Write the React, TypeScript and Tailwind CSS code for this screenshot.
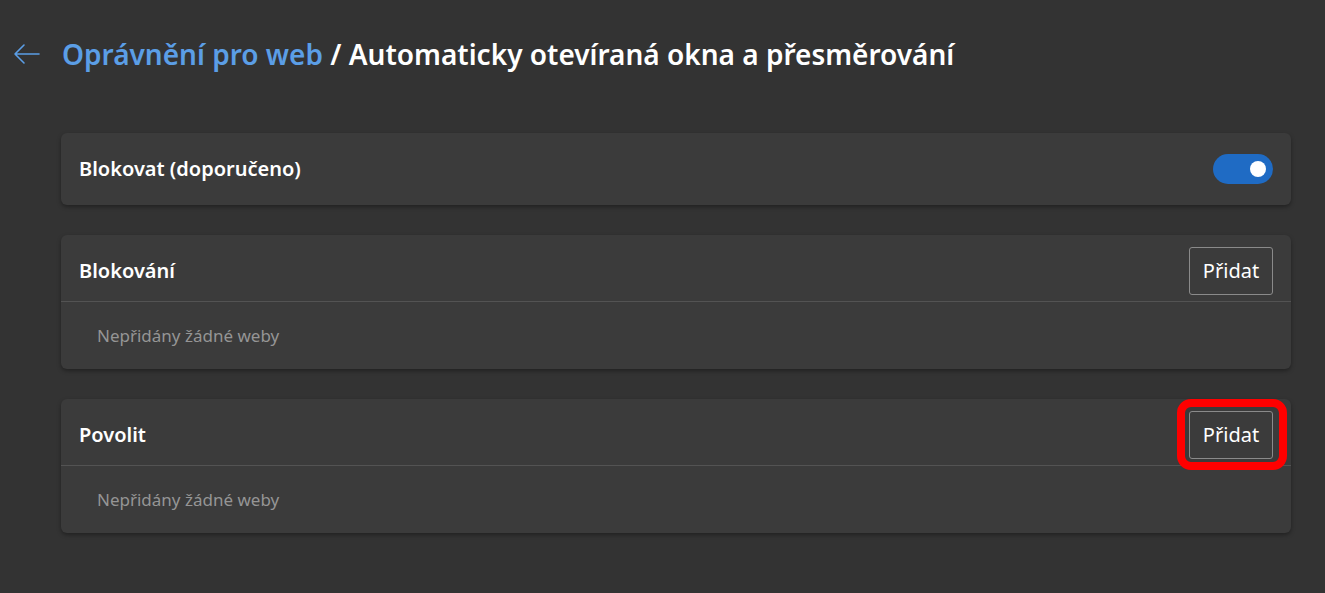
import React from 'react';

// --- Ikona šipky zpět ---
const BackArrow = () => (
  <svg width="28" height="22" viewBox="0 0 28 22" fill="none" stroke="currentColor" strokeWidth="1.6" strokeLinecap="round" strokeLinejoin="round">
    <path d="M26 11H2M11 2L2 11l9 9" />
  </svg>
);

// --- Přepínač (zapnuto) ---
const Toggle = () => (
  <div className="w-[60px] h-[30px] rounded-full bg-[#1f6bc4] flex items-center justify-end pr-[7px]">
    <div className="w-[16px] h-[16px] rounded-full bg-white" />
  </div>
);

// --- Karta se seznamem webů ---
const ListCard = ({ title, highlight }: { title: string; highlight?: boolean }) => (
  <section className="bg-[#3b3b3b] rounded-[6px] shadow-[0_2px_4px_rgba(0,0,0,0.35)]">
    <div className="flex items-center justify-between pl-[18px] pr-[18px] pt-[12px] pb-[6px]">
      <h2 className="text-[20px] font-semibold text-white">{title}</h2>
      <div className="relative">
        <button className="w-[84px] h-[48px] rounded-[3px] border border-[#8a8a8a] text-[20px] text-white bg-transparent">
          Přidat
        </button>
        {highlight && (
          <div className="absolute -left-[12px] -top-[12px] -right-[14px] -bottom-[11px] rounded-[14px] border-[8px] border-[#ff0000] pointer-events-none" />
        )}
      </div>
    </div>
    <div className="border-t border-[#535353] h-[68px] flex items-center pl-[36px]">
      <p className="text-[17px] text-[#959595]">Nepřidány žádné weby</p>
    </div>
  </section>
);

export default function App() {
  return (
    <div
      className="min-h-screen bg-[#333333] text-white"
      style={{ fontFamily: '"Segoe UI", "Noto Sans", "Open Sans", sans-serif' }}
    >
      <header className="flex items-center h-[108px] pl-[13px]">
        <span className="text-[#5b9ee6] mr-[21px]"><BackArrow /></span>
        <h1 className="text-[28px] font-semibold">
          <span className="text-[#5b9ee6]">Oprávnění pro web</span>
          <span className="text-white"> / Automaticky otevíraná okna a přesměrování</span>
        </h1>
      </header>

      <main className="pl-[61px] pr-[34px] pt-[25px] flex flex-col gap-[30px]">
        <section className="bg-[#3b3b3b] rounded-[6px] shadow-[0_2px_4px_rgba(0,0,0,0.35)] h-[72px] flex items-center justify-between pl-[18px] pr-[18px]">
          <p className="text-[20px] font-semibold text-white">Blokovat (doporučeno)</p>
          <Toggle />
        </section>

        <ListCard title="Blokování" />
        <ListCard title="Povolit" highlight />
      </main>
    </div>
  );
}
